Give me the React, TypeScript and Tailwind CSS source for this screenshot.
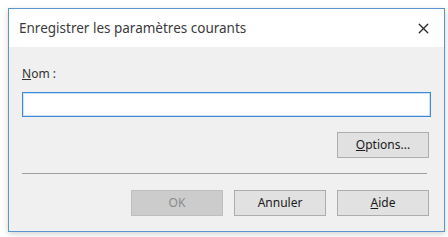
import { X } from 'lucide-react'

function DialogButton({
  children,
  disabled = false,
}: {
  children: React.ReactNode
  disabled?: boolean
}) {
  return (
    <button
      type="button"
      disabled={disabled}
      className={
        disabled
          ? 'flex h-[26px] w-[92px] items-center justify-center border border-[#bfbfbf] bg-[#cccccc] text-[12px] text-[#8a8a8a]'
          : 'flex h-[26px] w-[92px] items-center justify-center border border-[#adadad] bg-[#e1e1e1] text-[12px] text-[#1a1a1a]'
      }
    >
      {children}
    </button>
  )
}

export default function App() {
  return (
    <div className="h-[237px] w-[448px] bg-white pl-[8px] pt-[8px] font-['Noto_Sans',sans-serif]">
      <div className="flex h-[224px] w-[437px] flex-col border border-[#5a95d0] shadow-[0_2px_6px_rgba(0,0,0,0.18)]">
        <div className="flex h-[38px] items-center justify-between bg-white pl-[10px] pr-[12px]">
          <span className="text-[13.5px] text-[#3a3a3a]">Enregistrer les paramètres courants</span>
          <X size={17} strokeWidth={1.9} className="text-[#2a2a2a]" aria-hidden="true" />
        </div>

        <div className="flex flex-1 flex-col bg-[#f0f0f0] px-[13px] pt-[19px]">
          <label className="text-[12px] leading-[16px] text-[#333333]">
            <span className="underline">N</span>om :
          </label>
          <div className="mt-[10px] h-[25px] border border-[#3c8bd8] bg-white shadow-[inset_0_0_0_1px_rgba(120,170,225,0.35)]" />

          <div className="mt-[15px] flex justify-end pr-[2px]">
            <DialogButton>
              <span className="underline">O</span>ptions...
            </DialogButton>
          </div>

          <div className="mt-[15px] mr-[4px] h-px bg-[#a0a0a0]" />

          <div className="mt-[16px] flex justify-end gap-[11px] pr-[2px]">
            <DialogButton disabled>OK</DialogButton>
            <DialogButton>Annuler</DialogButton>
            <DialogButton>
              <span className="underline">A</span>ide
            </DialogButton>
          </div>
        </div>
      </div>
    </div>
  )
}
